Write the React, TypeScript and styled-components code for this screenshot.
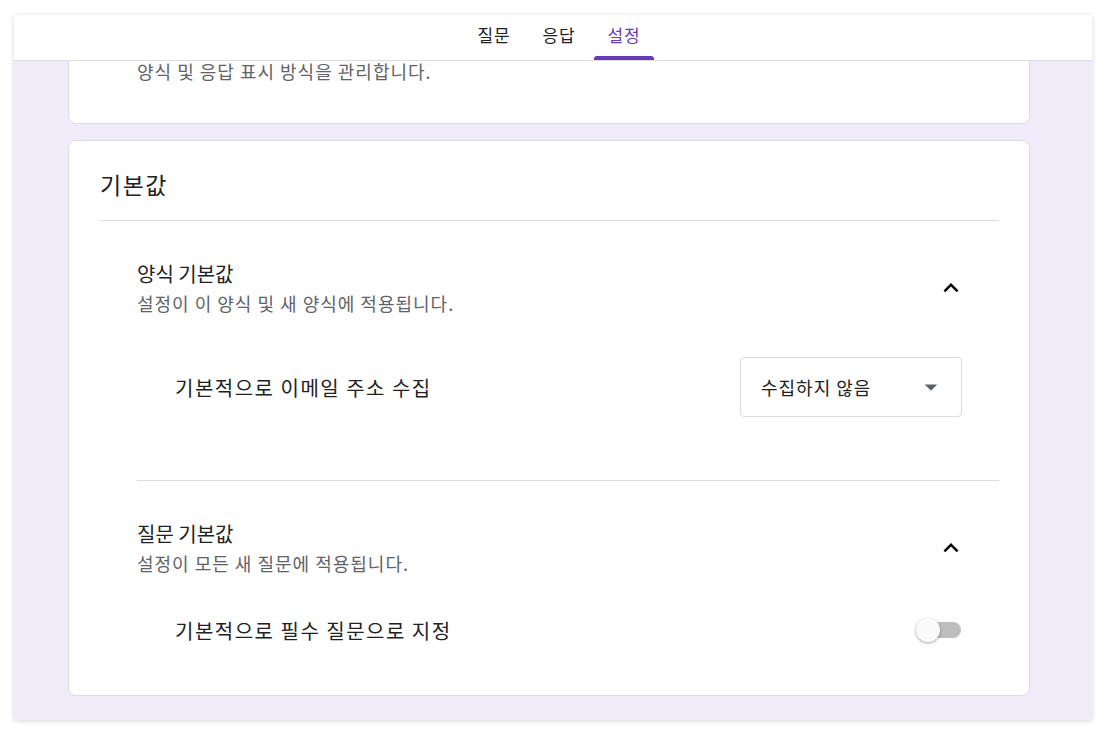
import React from "react";
import styled, { createGlobalStyle } from "styled-components";

const Global = createGlobalStyle`
  html, body { margin: 0; padding: 0; background: #ffffff; }
  body { font-family: "Noto Sans CJK KR", "Noto Sans", sans-serif; color: #202124; }
  * { box-sizing: border-box; }
`;

const Frame = styled.div`
  width: 1078px;
  height: 705px;
  margin: 15px 14px;
  display: flex;
  flex-direction: column;
  overflow: hidden;
  background: #f0ebf8;
  box-shadow: 0 1px 5px rgba(0, 0, 0, 0.16);
`;

const TabBar = styled.nav`
  flex-shrink: 0;
  height: 46px;
  background: #ffffff;
  border-bottom: 1px solid #dadce0;
  display: flex;
  justify-content: center;
  padding-left: 12px;
  gap: 5px;
  position: relative;
  z-index: 1;
`;

const Tab = styled.div<{ $active?: boolean }>`
  position: relative;
  width: 60px;
  height: 100%;
  display: flex;
  align-items: center;
  justify-content: center;
  padding-bottom: 6px;
  font-size: 17px;
  letter-spacing: 0.8px;
  color: ${(p) => (p.$active ? "#673ab7" : "#202124")};
  &::after {
    content: "";
    display: ${(p) => (p.$active ? "block" : "none")};
    position: absolute;
    left: 0;
    right: 0;
    bottom: 0;
    height: 4px;
    border-radius: 3px 3px 0 0;
    background: #673ab7;
  }
`;

const ScrollArea = styled.main`
  flex: 1;
  overflow: hidden;
`;

const Column = styled.div`
  width: 962px;
  margin: -25px 0 0 54px;
  display: flex;
  flex-direction: column;
  gap: 16px;
`;

const Card = styled.section`
  background: #ffffff;
  border: 1px solid #dadce0;
  border-radius: 8px;
  padding: 0 30px 0 31px;
`;

const CardHeader = styled.div`
  padding: 23px 0 16px;
  border-bottom: 1px solid #dadce0;
`;

const CardTitle = styled.h2`
  margin: 0;
  font-size: 23px;
  line-height: 40px;
  font-weight: 400;
  letter-spacing: 1.5px;
  color: #202124;
`;

const Section = styled.div<{ $divider?: boolean; $top?: number; $bottom?: number }>`
  margin-left: 37px;
  padding-top: ${(p) => p.$top ?? 38}px;
  padding-bottom: ${(p) => p.$bottom ?? 38}px;
  border-top: ${(p) => (p.$divider ? "1px solid #dadce0" : "none")};
`;

const SectionHeader = styled.div`
  display: flex;
  align-items: center;
  padding-right: 24px;
`;

const HeaderText = styled.div`
  flex: 1;
  display: flex;
  flex-direction: column;
`;

const SectionTitle = styled.div`
  font-size: 20px;
  line-height: 30px;
  color: #202124;
`;

const SectionSub = styled.div<{ $lh?: number }>`
  font-size: 18px;
  line-height: ${(p) => p.$lh ?? 28}px;
  letter-spacing: 1px;
  color: #5f6368;
`;

const IconButton = styled.button`
  width: 48px;
  height: 48px;
  border: none;
  background: transparent;
  padding: 0;
  display: flex;
  align-items: center;
  justify-content: center;
  color: #000000;
  cursor: pointer;
`;

const Row = styled.div<{ $top: number; $right: number }>`
  margin-top: ${(p) => p.$top}px;
  height: 60px;
  display: flex;
  align-items: center;
  justify-content: space-between;
  padding-left: 38px;
  padding-right: ${(p) => p.$right}px;
`;

const RowLabel = styled.div`
  font-size: 20px;
  letter-spacing: 1.5px;
  color: #202124;
`;

const Select = styled.div`
  width: 222px;
  height: 60px;
  border: 1px solid #dadce0;
  border-radius: 4px;
  padding: 0 15px 0 20px;
  display: flex;
  align-items: center;
  justify-content: space-between;
  font-size: 18px;
  letter-spacing: 1px;
  color: #202124;
`;

const Switch = styled.div`
  position: relative;
  width: 45px;
  height: 24px;
  display: flex;
  align-items: center;
`;

const Track = styled.div`
  width: 100%;
  height: 16px;
  border-radius: 8px;
  background: #bdbdbd;
`;

const Thumb = styled.div`
  position: absolute;
  left: 0;
  top: 0;
  width: 24px;
  height: 24px;
  border-radius: 50%;
  background: #fafafa;
  box-shadow: 0 1px 3px rgba(0, 0, 0, 0.35);
`;

const ChevronUp = () => (
  <svg width="30" height="30" viewBox="0 0 24 24" fill="currentColor">
    <path d="M12 8l-6 6 1.41 1.41L12 10.83l4.59 4.58L18 14z" />
  </svg>
);

const ArrowDrop = () => (
  <svg width="30" height="30" viewBox="0 0 24 24" fill="#5f6368">
    <path d="M7 10l5 5 5-5z" />
  </svg>
);

export default function App() {
  return (
    <>
      <Global />
      <Frame>
        <TabBar>
          <Tab>질문</Tab>
          <Tab>응답</Tab>
          <Tab $active>설정</Tab>
        </TabBar>
        <ScrollArea>
          <Column>
            <Card>
              <Section $top={24} $bottom={42}>
                <SectionSub $lh={20}>양식 및 응답 표시 방식을 관리합니다.</SectionSub>
              </Section>
            </Card>
            <Card>
              <CardHeader>
                <CardTitle>기본값</CardTitle>
              </CardHeader>
              <Section $top={38} $bottom={63}>
                <SectionHeader>
                  <HeaderText>
                    <SectionTitle>양식 기본값</SectionTitle>
                    <SectionSub>설정이 이 양식 및 새 양식에 적용됩니다.</SectionSub>
                  </HeaderText>
                  <IconButton aria-label="접기">
                    <ChevronUp />
                  </IconButton>
                </SectionHeader>
                <Row $top={40} $right={37}>
                  <RowLabel>기본적으로 이메일 주소 수집</RowLabel>
                  <Select>
                    <span>수집하지 않음</span>
                    <ArrowDrop />
                  </Select>
                </Row>
              </Section>
              <Section $divider $top={38} $bottom={35}>
                <SectionHeader>
                  <HeaderText>
                    <SectionTitle>질문 기본값</SectionTitle>
                    <SectionSub>설정이 모든 새 질문에 적용됩니다.</SectionSub>
                  </HeaderText>
                  <IconButton aria-label="접기">
                    <ChevronUp />
                  </IconButton>
                </SectionHeader>
                <Row $top={23} $right={38}>
                  <RowLabel>기본적으로 필수 질문으로 지정</RowLabel>
                  <Switch>
                    <Track />
                    <Thumb />
                  </Switch>
                </Row>
              </Section>
            </Card>
          </Column>
        </ScrollArea>
      </Frame>
    </>
  );
}
